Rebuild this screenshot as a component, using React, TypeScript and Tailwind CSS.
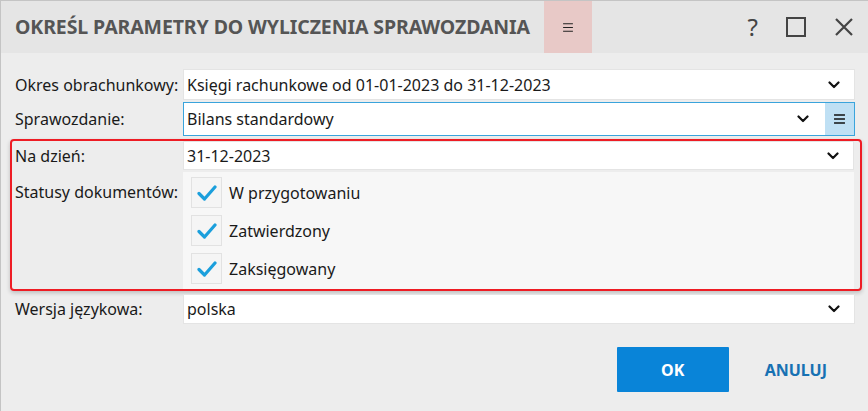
import React from 'react';

const Chevron: React.FC = () => (
  <svg width="12" height="8" viewBox="0 0 12 8" className="shrink-0">
    <path d="M1.5 1.5 L6 6 L10.5 1.5" fill="none" stroke="#111" strokeWidth="2.2" strokeLinecap="round" strokeLinejoin="round" />
  </svg>
);

const Check: React.FC = () => (
  <svg width="20" height="16" viewBox="0 0 20 16">
    <path d="M2 8.5 L7.5 14 L18 2" fill="none" stroke="#1b9fdc" strokeWidth="3.2" strokeLinecap="round" strokeLinejoin="round" />
  </svg>
);

const Burger: React.FC<{ w: number; sw: number; color: string }> = ({ w, sw, color }) => (
  <svg width={w} height={w - 1} viewBox="0 0 12 11">
    <path d="M0 1 H12 M0 5.5 H12 M0 10 H12" stroke={color} strokeWidth={sw} />
  </svg>
);

const Select: React.FC<{ value: string; h: string }> = ({ value, h }) => (
  <div className={`flex-1 ${h} bg-white border border-[#e4e4e4] flex items-center pl-[3px] pr-[14px]`}>
    <span className="flex-1">{value}</span>
    <Chevron />
  </div>
);

const statuses = ['W przygotowaniu', 'Zatwierdzony', 'Zaksięgowany'];

export default function App() {
  return (
    <div
      className="w-[868px] h-[411px] bg-[#ededed] border-l border-t border-[#c4c4c4] text-[16px] text-[#1a1a1a] overflow-hidden"
      style={{ fontFamily: '"Noto Sans", "Open Sans", sans-serif' }}
    >
      <div className="h-[52px] bg-[#e5e5e5] flex items-stretch">
        <div className="pl-[14px] flex items-center text-[19.5px] font-bold text-[#555] tracking-[-0.1px]">
          OKREŚL PARAMETRY DO WYLICZENIA SPRAWOZDANIA
        </div>
        <div className="ml-[14px] w-[48px] bg-[#e8c9c7] flex items-center justify-center">
          <Burger w={10} sw={1.3} color="#222" />
        </div>
        <div className="flex-1" />
        <div className="flex items-center gap-[28px] pr-[14px] text-[#444]">
          <span className="text-[24px] leading-none">?</span>
          <svg width="20" height="20" viewBox="0 0 20 20">
            <rect x="1" y="1" width="18" height="18" fill="none" stroke="#444" strokeWidth="2" />
          </svg>
          <svg width="20" height="20" viewBox="0 0 20 20">
            <path d="M2 2 L18 18 M18 2 L2 18" stroke="#444" strokeWidth="2.2" />
          </svg>
        </div>
      </div>

      <div className="pt-[16px] pr-[13px]">
        <div className="flex items-center gap-0">
          <div className="w-[182px] pl-[14px]">Okres obrachunkowy:</div>
          <Select value="Księgi rachunkowe od 01-01-2023 do 31-12-2023" h="h-[31px]" />
        </div>

        <div className="flex items-center mt-[2px]">
          <div className="w-[182px] pl-[14px]">Sprawozdanie:</div>
          <div className="flex-1 h-[34px] bg-white border border-[#3aa4dc] flex items-stretch">
            <div className="flex-1 flex items-center pl-[3px] pr-[16px]">
              <span className="flex-1">Bilans standardowy</span>
              <Chevron />
            </div>
            <div className="w-[29px] bg-[#bfe0f4] flex items-center justify-center">
              <Burger w={11} sw={1.6} color="#111" />
            </div>
          </div>
        </div>

        <div className="ml-[9px] mr-[-7px] mt-[3px] border-2 border-[#ee1c24] rounded-[4px] shadow-[0_2px_4px_rgba(0,0,0,0.2)] pr-[6px]">
          <div className="flex items-center">
            <div className="w-[171px] pl-[3px]">Na dzień:</div>
            <Select value="31-12-2023" h="h-[29px]" />
          </div>
          <div className="flex mt-[2px]">
            <div className="w-[171px] pl-[3px] pt-[8px]">Statusy dokumentów:</div>
            <div className="flex-1 bg-[#f7f7f7] pl-[8px] pt-[5px] pb-[5px] flex flex-col gap-[7px]">
              {statuses.map((s) => (
                <div key={s} className="flex items-center gap-[7px]">
                  <div className="w-[31px] h-[31px] border border-[#e2e2e2] bg-[#f5f5f5] flex items-center justify-center">
                    <Check />
                  </div>
                  <span>{s}</span>
                </div>
              ))}
            </div>
          </div>
        </div>

        <div className="flex items-center mt-[3px]">
          <div className="w-[182px] pl-[14px]">Wersja językowa:</div>
          <Select value="polska" h="h-[30px]" />
        </div>

        <div className="flex justify-end items-center mt-[23px] pr-[28px]">
          <button className="w-[112px] h-[45px] bg-[#0984d8] text-white font-bold text-[16px] rounded-[1px]">OK</button>
          <button className="ml-[36px] font-bold text-[16px] text-[#1771b3]">ANULUJ</button>
        </div>
      </div>
    </div>
  );
}
